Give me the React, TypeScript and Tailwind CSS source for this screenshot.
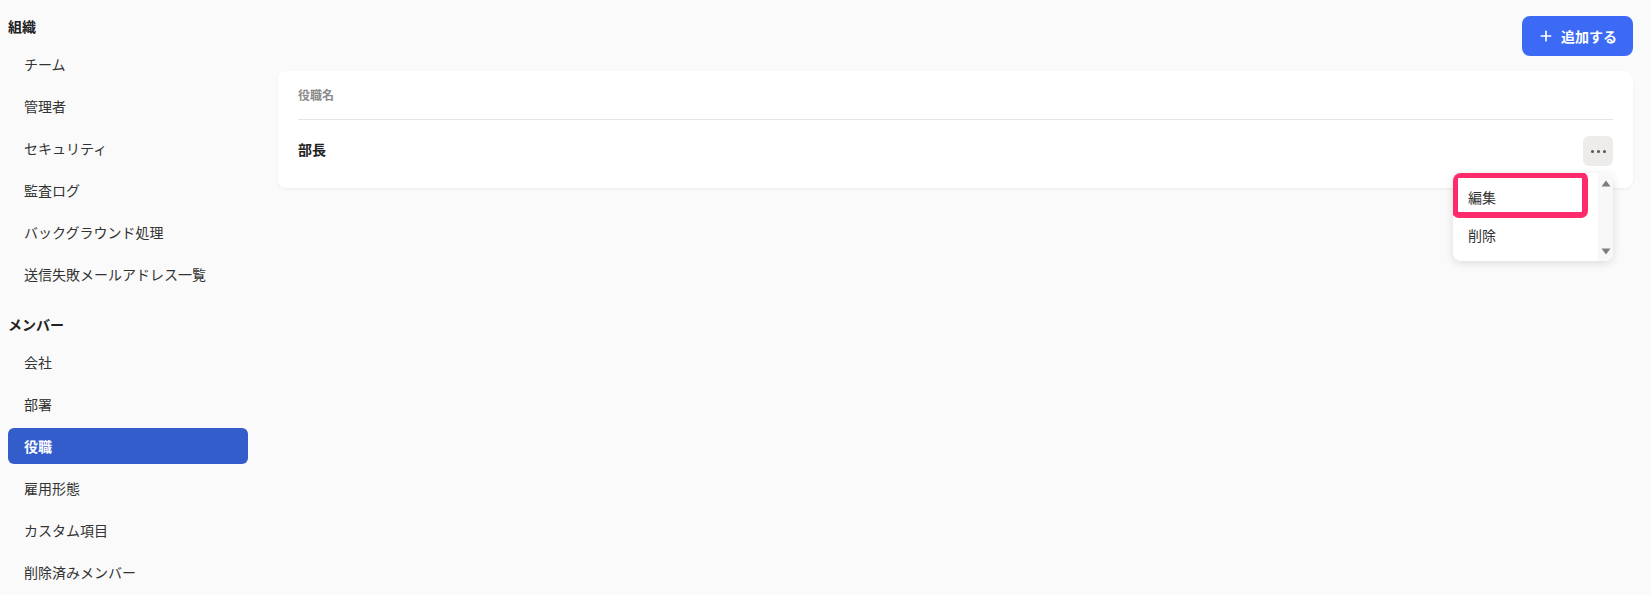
import React from "react";
import { Plus } from "lucide-react";

const jp = { fontFamily: '"Noto Sans CJK JP", "Noto Sans", sans-serif' };

type Section = { title: string; items: string[] };

const sections: Section[] = [
  {
    title: "組織",
    items: ["チーム", "管理者", "セキュリティ", "監査ログ", "バックグラウンド処理", "送信失敗メールアドレス一覧"],
  },
  {
    title: "メンバー",
    items: ["会社", "部署", "役職", "雇用形態", "カスタム項目", "削除済みメンバー"],
  },
];

const ACTIVE = "役職";

function Sidebar() {
  return (
    <nav className="w-[256px] shrink-0 px-2 pt-[16px]">
      {sections.map((s, i) => (
        <div key={s.title} className={i > 0 ? "mt-[22px]" : ""}>
          <div className="h-5 text-[14px] leading-5 font-bold text-[#222]">{s.title}</div>
          <ul className="mt-[10px] flex flex-col gap-[6px]">
            {s.items.map((item) => {
              const active = item === ACTIVE;
              return (
                <li
                  key={item}
                  className={
                    active
                      ? "flex h-9 items-center rounded-md bg-[#335dcb] px-4 text-[14px] font-bold text-white"
                      : "flex h-9 items-center rounded-md px-4 text-[14px] text-[#333]"
                  }
                >
                  {item}
                </li>
              );
            })}
          </ul>
        </div>
      ))}
    </nav>
  );
}

function RowMenu() {
  return (
    <div className="absolute right-0 top-[37px] z-10 flex h-[88px] w-[160px] overflow-hidden rounded-lg bg-white shadow-[0_2px_10px_rgba(0,0,0,0.12)]">
      <ul className="flex-1 pt-[5px]">
        <li className="flex h-[38px] items-center px-[15px] text-[14px] text-[#333]">編集</li>
        <li className="flex h-[38px] items-center px-[15px] text-[14px] text-[#333]">削除</li>
      </ul>
      <div className="flex w-[15px] flex-col items-center justify-between bg-[#f8f8f8] pt-[7px] pb-[6px]">
        <svg width="10" height="7" viewBox="0 0 10 7">
          <path d="M5 0.5 L9.5 6.5 L0.5 6.5 Z" fill="#7d7d7d" />
        </svg>
        <svg width="10" height="7" viewBox="0 0 10 7">
          <path d="M0.5 0.5 L9.5 0.5 L5 6.5 Z" fill="#7d7d7d" />
        </svg>
      </div>
      {/* focus ring around the first item */}
      <div className="pointer-events-none absolute left-[-1px] top-[-1px] h-[46px] w-[136px] rounded-[7px] border-[6px] border-[#ff2a6b]" />
    </div>
  );
}

function PositionsTable() {
  return (
    <div className="rounded-lg bg-white px-5 pt-4 pb-[22px] shadow-[0_1px_3px_rgba(0,0,0,0.06)]">
      <div className="border-b border-[#e4e4e4] pb-4 text-[12px] leading-4 font-bold text-[#8a8a8a]">役職名</div>
      <div className="flex items-center justify-between pt-4">
        <span className="pb-[3px] text-[14px] font-bold text-[#222]">部長</span>
        <div className="relative">
          <button className="flex h-[30px] w-[30px] items-center justify-center gap-[3px] rounded-md bg-[#edecea]">
            <span className="h-[3px] w-[3px] rounded-full bg-[#555]" />
            <span className="h-[3px] w-[3px] rounded-full bg-[#555]" />
            <span className="h-[3px] w-[3px] rounded-full bg-[#555]" />
          </button>
          <RowMenu />
        </div>
      </div>
    </div>
  );
}

export default function App() {
  return (
    <div className="flex min-h-[595px] w-full bg-[#fafafa]" style={jp}>
      <Sidebar />
      <main className="flex-1 pl-[22px] pr-[18px] pt-4">
        <div className="flex justify-end">
          <button className="flex h-10 items-center gap-[7px] rounded-lg bg-[#3d6af5] px-4 text-[14px] font-bold text-white">
            <Plus size={16} strokeWidth={2.5} />
            追加する
          </button>
        </div>
        <div className="mt-[15px]">
          <PositionsTable />
        </div>
      </main>
    </div>
  );
}
